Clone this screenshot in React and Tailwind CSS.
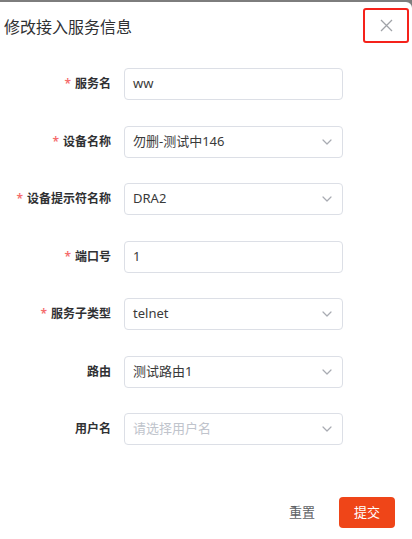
import React from 'react';

const font = { fontFamily: '"Noto Sans", "Noto Sans CJK SC", sans-serif' };

const Chevron = () => (
  <svg width="10" height="6" viewBox="0 0 10 6" fill="none" className="shrink-0">
    <path d="M1 1l4 4 4-4" stroke="#a8abb2" strokeWidth="1.2" strokeLinecap="round" strokeLinejoin="round" />
  </svg>
);

const fields = [
  { label: '服务名', required: true, value: 'ww', select: false },
  { label: '设备名称', required: true, value: '勿删-测试中146', select: true },
  { label: '设备提示符名称', required: true, value: 'DRA2', select: true },
  { label: '端口号', required: true, value: '1', select: false },
  { label: '服务子类型', required: true, value: 'telnet', select: true },
  { label: '路由', required: false, value: '测试路由1', select: true },
  { label: '用户名', required: false, value: '', placeholder: '请选择用户名', select: true },
];

const App = () => {
  return (
    <div className="w-[412px] h-[539px] bg-[#7d7d7d] pt-[2px] overflow-hidden" style={font}>
      <div className="h-[537px] bg-white rounded-tr-[6px]">
        {/* header */}
        <div className="flex items-start justify-between pl-[4px] pr-[3px] pt-[6px]">
          <h2 className="text-[16px] leading-[24px] text-[#303133] mt-[7px]">修改接入服务信息</h2>
          <button className="w-[46px] h-[35px] border-2 border-[#f5221b] rounded-[3px] flex items-center justify-center">
            <svg width="13" height="13" viewBox="0 0 13 13">
              <path d="M1 1l11 11M12 1L1 12" stroke="#a0a3a8" strokeWidth="1.3" />
            </svg>
          </button>
        </div>

        {/* form */}
        <div className="flex flex-col gap-[25.5px] mt-[25px]">
          {fields.map((f) => (
            <div key={f.label} className="flex items-center">
              <label className="w-[124px] pr-[13px] text-right text-[12px] font-semibold text-[#303133]">
                {f.required && <span className="text-[#f56c6c] mr-[4px]">*</span>}
                {f.label}
              </label>
              <div className="w-[219px] h-[32px] border border-[#dcdfe6] rounded-[4px] flex items-center justify-between pl-[8px] pr-[10px]">
                {f.value ? (
                  <span className="text-[13px] text-[#3a3a3a]">{f.value}</span>
                ) : (
                  <span className="text-[13px] text-[#c0c4cc]">{f.placeholder}</span>
                )}
                {f.select && <Chevron />}
              </div>
            </div>
          ))}
        </div>

        {/* footer */}
        <div className="flex justify-end items-center gap-[12px] pr-[17px] mt-[52px]">
          <button className="w-[50px] h-[31px] text-[13px] text-[#606266]">重置</button>
          <button className="w-[56px] h-[31px] rounded-[4px] bg-[#ef4518] text-white text-[13px]">提交</button>
        </div>
      </div>
    </div>
  );
};

export default App;
